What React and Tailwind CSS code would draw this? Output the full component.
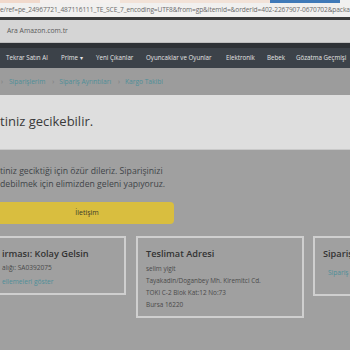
export default function App() {
  const nav = [
    ["Tekrar Satın Al", "w-[55px]"],
    ["Prime ▾", "w-[35px]"],
    ["Yeni Çıkanlar", "w-[50px]"],
    ["Oyuncaklar ve Oyunlar", "w-[80px]"],
    ["Elektronik", "w-[41px]"],
    ["Bebek", "w-[29px]"],
    ["Gözatma Geçmişi", "w-[60px]"],
  ];
  return (
    <div className="w-[350px] h-[350px] overflow-hidden bg-[#a0a0a0] flex flex-col" style={{ fontFamily: '"Open Sans", "Noto Sans", sans-serif' }}>
      {/* top strip */}
      <div className="h-[3px] flex shrink-0">
        <div className="w-[40px] bg-[#f1d9cc]" />
        <div className="w-[80px] bg-[#f4f0ee]" />
        <div className="w-[150px] bg-[#f2e2d8]" />
        <div className="w-[70px] bg-[#3f79b8]" />
        <div className="flex-1 bg-[#f0f0f0]" />
      </div>
      {/* url bar */}
      <div className="h-[14px] bg-[#f1f0ef] flex items-center shrink-0 whitespace-nowrap overflow-hidden">
        <span className="text-[6.6px] text-[#6b6b6b] tracking-[-0.1px]">e/ref=pe_24967721_487116111_TE_SCE_7_encoding=UTF8&amp;from=gp&amp;itemId=&amp;orderId=402-2267907-0670702&amp;packa</span>
      </div>
      <div className="h-[3px] bg-[#3a3a3a] shrink-0" />
      {/* search */}
      <div className="h-[23px] bg-[#d5d5d5] flex items-center shrink-0 border-b border-[#bdbdbd]">
        <span className="ml-[7px] text-[6.8px] text-[#5a5a5a]">Ara Amazon.com.tr</span>
      </div>
      <div className="h-[5px] bg-[#2e3236] shrink-0" />
      {/* nav */}
      <div className="h-[20px] bg-[#3c4249] flex items-center shrink-0 whitespace-nowrap overflow-hidden pl-[6px]">
        {nav.map(([t, w]) => (
          <span key={t} className={`${w} shrink-0 text-[6.2px] font-medium text-[#e4e4e4]`}>{t}</span>
        ))}
      </div>
      {/* breadcrumb */}
      <div className="h-[27px] bg-[#9c9c9c] flex items-center shrink-0 whitespace-nowrap text-[6.6px] text-[#4e8f99]">
        <span className="ml-[1px] text-[#7a7a7a]">›</span>
        <span className="ml-[6px]">Siparişlerim</span>
        <span className="ml-[7px] text-[#7a7a7a]">›</span>
        <span className="ml-[5px]">Sipariş Ayrıntıları</span>
        <span className="ml-[7px] text-[#7a7a7a]">›</span>
        <span className="ml-[5px]">Kargo Takibi</span>
      </div>
      {/* heading band */}
      <div className="h-[55px] bg-[#dedede] flex items-center shrink-0 border-b border-[#c9c9c9]">
        <span className="text-[13px] text-[#3a3a3a] leading-none -mt-[2px]">tiniz gecikebilir.</span>
      </div>
      {/* content */}
      <div className="flex flex-col pt-[15px]">
        <div className="text-[8.7px] leading-[13px] text-[#3f4448] whitespace-nowrap">
          <div>tiniz geciktiği için özür dileriz. Siparişinizi</div>
          <div>debilmek için elimizden geleni yapıyoruz.</div>
        </div>
        <div className="mt-[11px] w-[174px] h-[22px] bg-[#d9be3f] rounded-r-[4px] flex items-center justify-center">
          <span className="text-[7px] text-[#3b3a2a]">İletişim</span>
        </div>
        <div className="mt-[12px] flex items-start whitespace-nowrap">
          <div className="-ml-[10px] w-[136px] h-[59px] shrink-0 border-2 border-[#cfcfcf] pl-[10px] pt-[9px]">
            <div className="text-[9.2px] font-semibold text-[#333] leading-[13px]">irması: Kolay Gelsin</div>
            <div className="text-[6.6px] text-[#4a4a4a] leading-[14px] mt-[1px]">alığı: SA0392075</div>
            <div className="text-[6.6px] text-[#4e8f99] leading-[14px]">ellemeleri göster</div>
          </div>
          <div className="ml-[10px] w-[168px] h-[82px] shrink-0 border-2 border-[#cfcfcf] pl-[8px] pt-[9px]">
            <div className="text-[9.2px] font-semibold text-[#333] leading-[13px]">Teslimat Adresi</div>
            <div className="text-[6.4px] text-[#4a4a4a] leading-[12px] mt-[3px]">
              <div>selim yigit</div>
              <div>Tayakadin/Doganbey Mh. Kiremitci Cd.</div>
              <div>TOKI C-2 Blok Kat:12 No:73</div>
              <div>Bursa 16220</div>
            </div>
          </div>
          <div className="ml-[9px] w-[80px] h-[60px] shrink-0 border-2 border-[#cfcfcf] pl-[8px] pt-[9px]">
            <div className="text-[9.2px] font-semibold text-[#333] leading-[13px]">Siparişin</div>
            <div className="text-[6.6px] text-[#4e8f99] leading-[14px] mt-[6px] ml-[5px]">Sipariş</div>
          </div>
        </div>
      </div>
    </div>
  );
}
